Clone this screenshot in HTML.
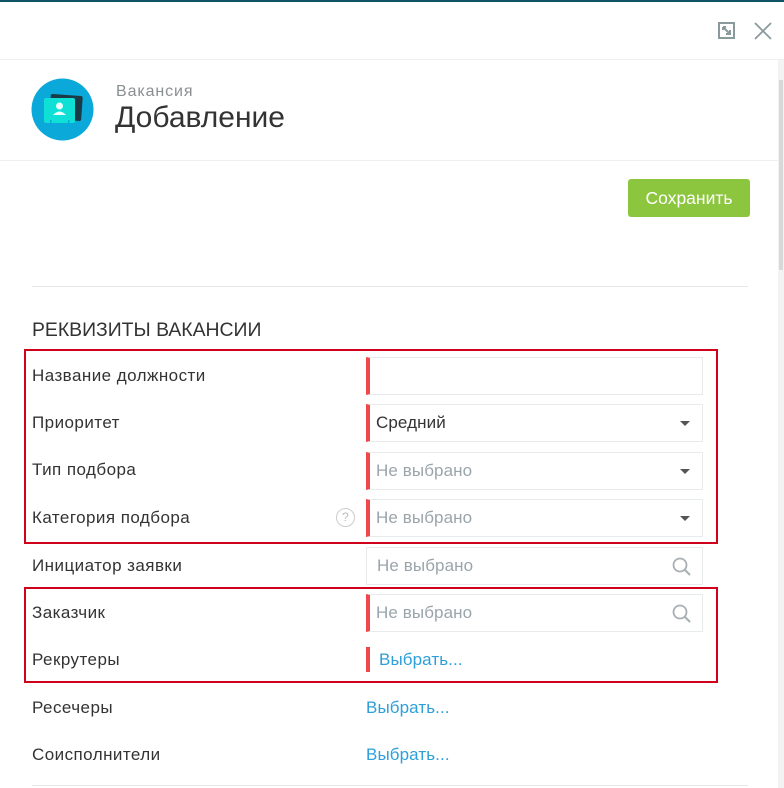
<!DOCTYPE html>
<html><head><meta charset="utf-8"><style>
*{box-sizing:border-box;margin:0;padding:0}
body{width:784px;height:788px;overflow:hidden;background:#fff;font-family:"Liberation Sans",sans-serif;position:relative;color:#333}
.a{position:absolute}
.lbl{position:absolute;left:32px;font-size:17px;letter-spacing:.45px;color:#333}
.inp{position:absolute;left:366px;width:337px;height:38px;border:1px solid #e8ebec;background:#fff;font-size:17px;line-height:36px;padding-left:10px;color:#9aa5aa;letter-spacing:.1px}
.inp.r{border-left:4px solid #f0474c;padding-left:6px}
.caret{position:absolute;right:12px;top:16px;width:0;height:0;border-left:5px solid transparent;border-right:5px solid transparent;border-top:5px solid #555}
.box{position:absolute;border:2px solid #d0021b}
.link{color:#2d9fd9;font-size:17px;letter-spacing:.1px}
</style></head><body>
<div class="a" style="left:0;top:0;width:784px;height:2px;background:#0d5363"></div>
<svg class="a" style="left:717px;top:21px" width="20" height="20"><rect x="2" y="2" width="15" height="15" fill="none" stroke="#8a9a9c" stroke-width="2"/><path d="M6 6 L13 13 M13 9 V13 H9 M6 6 H9 M6 6 V9" stroke="#8a9a9c" stroke-width="2" fill="none"/></svg>
<svg class="a" style="left:753px;top:21px" width="20" height="20"><path d="M2 2 L18 18 M18 2 L2 18" stroke="#8a9a9c" stroke-width="1.8"/></svg>
<div class="a" style="left:0;top:59px;width:784px;height:1px;background:#eceff0"></div>
<div class="a" style="left:778px;top:60px;width:6px;height:728px;background:#f3f3f3"></div>
<div class="a" style="left:779px;top:80px;width:4px;height:190px;background:#d8d8d8"></div>
<svg class="a" style="left:31px;top:78px" width="63" height="63"><circle cx="31.5" cy="31.5" r="31" fill="#0aa9d9"/><rect x="19" y="17" width="32" height="25" rx="2" fill="#1b3a47" transform="rotate(4 35 29)"/><rect x="13" y="20" width="31" height="25" rx="2" fill="#0ee0d6"/><circle cx="28.5" cy="28" r="3.5" fill="#e9ffff"/><path d="M22 37 Q28.5 30 35 37 Z" fill="#e9ffff"/><rect x="19" y="42" width="1.5" height="4" fill="#0aa9d9"/><rect x="37" y="42" width="1.5" height="4" fill="#0aa9d9"/></svg>
<div class="a" style="left:116px;top:83px;font-size:16px;letter-spacing:.9px;color:#8a8f91">Вакансия</div>
<div class="a" style="left:115px;top:101px;font-size:30px;color:#333">Добавление</div>
<div class="a" style="left:0;top:160px;width:778px;height:1px;background:#eceff0"></div>
<div class="a" style="left:628px;top:179px;width:122px;height:38px;background:#8cc63e;border-radius:3px;color:#fff;font-size:17.5px;line-height:38px;text-align:center">Сохранить</div>
<div class="a" style="left:32px;top:286px;width:716px;height:1px;background:#e6e9ea"></div>
<div class="a" style="left:32px;top:319px;font-size:19.4px;color:#333">РЕКВИЗИТЫ ВАКАНСИИ</div>

<div class="lbl" style="top:366px">Название должности</div>
<div class="inp r" style="top:357px"></div>
<div class="lbl" style="top:413px">Приоритет</div>
<div class="inp r" style="top:404px;color:#333">Средний<span class="caret"></span></div>
<div class="lbl" style="top:460px">Тип подбора</div>
<div class="inp r" style="top:452px">Не выбрано<span class="caret"></span></div>
<div class="lbl" style="top:508px">Категория подбора</div>
<div class="a" style="left:336px;top:508px;width:19px;height:19px;border:1.5px solid #ccc;border-radius:50%;font-size:12px;color:#bbb;text-align:center;line-height:16px">?</div>
<div class="inp r" style="top:499px">Не выбрано<span class="caret"></span></div>
<div class="lbl" style="top:556px">Инициатор заявки</div>
<div class="inp" style="top:547px">Не выбрано<svg class="a" style="right:10px;top:9px" width="20" height="20"><circle cx="8" cy="8" r="6.5" fill="none" stroke="#a8b0b3" stroke-width="1.8"/><path d="M13 13 L18 18" stroke="#a8b0b3" stroke-width="2"/></svg></div>
<div class="lbl" style="top:603px">Заказчик</div>
<div class="inp r" style="top:594px">Не выбрано<svg class="a" style="right:10px;top:9px" width="20" height="20"><circle cx="8" cy="8" r="6.5" fill="none" stroke="#a8b0b3" stroke-width="1.8"/><path d="M13 13 L18 18" stroke="#a8b0b3" stroke-width="2"/></svg></div>
<div class="lbl" style="top:650px">Рекрутеры</div>
<div class="a" style="left:366px;top:647px;width:4px;height:25px;background:#f0474c"></div>
<div class="a link" style="left:379px;top:650px">Выбрать...</div>
<div class="lbl" style="top:698px">Ресечеры</div>
<div class="a link" style="left:366px;top:698px">Выбрать...</div>
<div class="lbl" style="top:745px">Соисполнители</div>
<div class="a link" style="left:366px;top:745px">Выбрать...</div>
<div class="a" style="left:32px;top:785px;width:716px;height:1px;background:#e6e9ea"></div>

<div class="box" style="left:24px;top:349px;width:694px;height:195px"></div>
<div class="box" style="left:24px;top:587px;width:694px;height:96px"></div>
</body></html>
